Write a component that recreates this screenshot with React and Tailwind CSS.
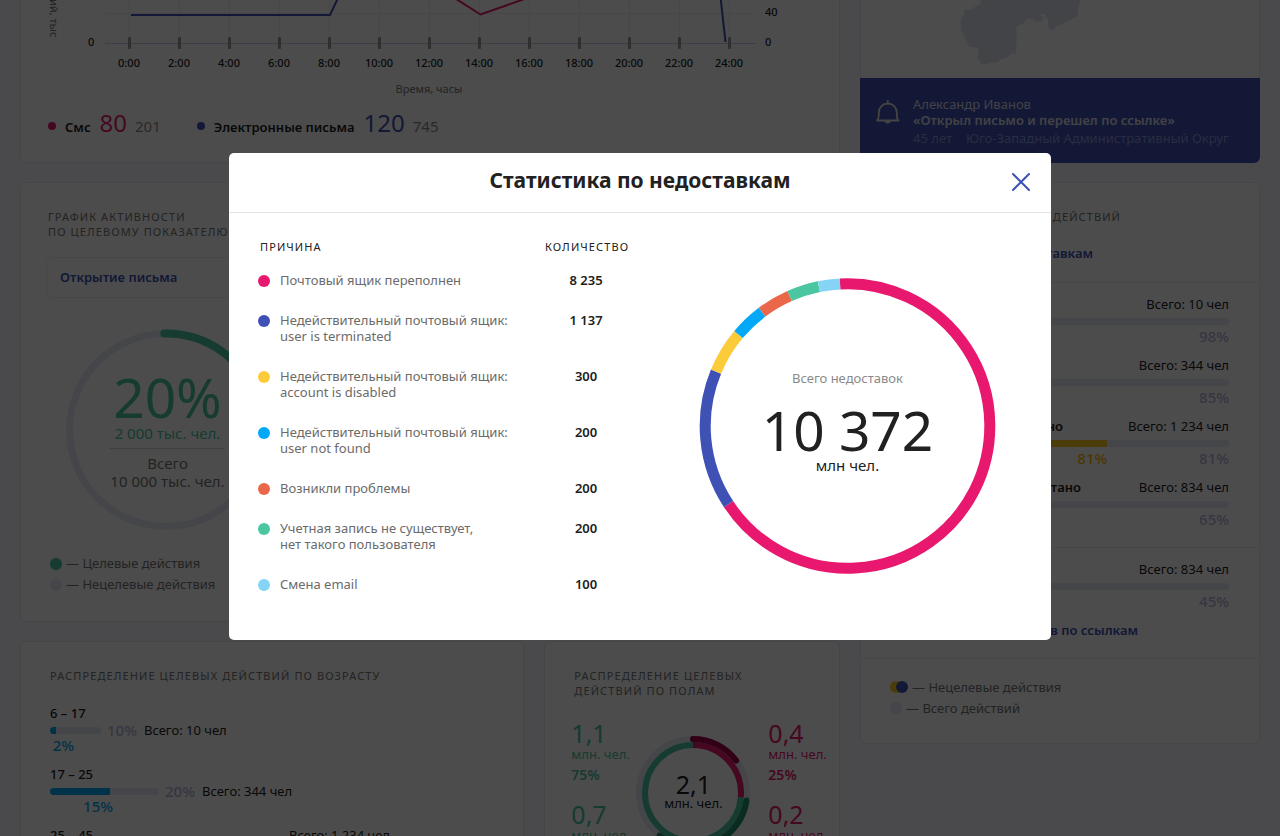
import React from "react";

const ticks = ["0:00", "2:00", "4:00", "6:00", "8:00", "10:00", "12:00", "14:00", "16:00", "18:00", "20:00", "22:00", "24:00"];

const reasons = [
  { lines: ["Почтовый ящик переполнен"], count: "8 235", color: "#e9186f", from: -3, to: 236.7 },
  { lines: ["Недействительный почтовый ящик:", "user is terminated"], count: "1 137", color: "#3f51b5", from: 236.7, to: 292.5 },
  { lines: ["Недействительный почтовый ящик:", "account is disabled"], count: "300", color: "#fccb39", from: 292.5, to: 310 },
  { lines: ["Недействительный почтовый ящик:", "user not found"], count: "200", color: "#03a9f9", from: 310, to: 323.1 },
  { lines: ["Возникли проблемы"], count: "200", color: "#eb6749", from: 323.1, to: 336 },
  { lines: ["Учетная запись не существует,", "нет такого пользователя"], count: "200", color: "#4ac6a1", from: 336, to: 348.4 },
  { lines: ["Смена email"], count: "100", color: "#86d4f5", from: 348.4, to: 357 },
];

function arcPath(cx, cy, r, from, to) {
  const point = (deg) => {
    const a = (deg * Math.PI) / 180;
    return `${cx + r * Math.sin(a)} ${cy - r * Math.cos(a)}`;
  };
  return `M ${point(from)} A ${r} ${r} 0 ${to - from > 180 ? 1 : 0} 1 ${point(to)}`;
}

function Arc({ cx, cy, r, from, to, ...rest }) {
  return <path d={arcPath(cx, cy, r, from, to)} fill="none" {...rest} />;
}

function Card({ className = "", children }) {
  return <section className={`border border-[#e9eaf4] bg-white ${className}`}>{children}</section>;
}

function CardTitle({ children }) {
  return <h2 className="text-[11px] leading-[15px] font-normal tracking-widest text-[#757575] uppercase">{children}</h2>;
}

function ActivityChart() {
  return (
    <svg viewBox="21 0 818 100" className="block w-full" fontSize="11" fill="#212121">
      <g stroke="#eeeff7">
        <path d="M105 13.5H755" />
        {ticks.map((t, i) => (
          <path key={t} d={`M${129.5 + i * 50} 0V43`} />
        ))}
      </g>
      <path d="M105 43.5H755" stroke="#c5cae9" />
      {ticks.map((t, i) => (
        <rect key={t} x={128 + i * 50} y="37" width="3" height="12" rx="1" fill="#9e9e9e" />
      ))}
      <path d="M131 15H330L338.500 -3" fill="none" stroke="#3f51b5" strokeWidth="2" />
      <path d="M453 -3L480.500 14.500L530 -3" fill="none" stroke="#e9186f" strokeWidth="2" />
      <path d="M720.500 -3L725.500 42" fill="none" stroke="#3f51b5" strokeWidth="2" />
      <text x="50" y="-1" fill="#757575" transform="rotate(90 50 -1)">ий, тыс</text>
      <text x="88" y="46" fontWeight="500">0</text>
      <text x="765" y="16" fontWeight="500">40</text>
      <text x="765" y="46" fontWeight="500">0</text>
      {ticks.map((t, i) => (
        <text key={t} x={129 + i * 50} y="67" textAnchor="middle" fontWeight="500">{t}</text>
      ))}
      <text x="429" y="93" textAnchor="middle" fill="#757575">Время, часы</text>
    </svg>
  );
}

function ChannelLegend({ name, value, total, dotClass, valueClass }) {
  return (
    <p className="flex items-baseline text-[13px] leading-4 text-[#212121]">
      <span className="font-semibold">
        <span className={`mr-[9px] mb-0.5 inline-block size-2 rounded-full ${dotClass}`} />
        {name}
      </span>
      <span className={`ml-[9px] text-[24px] leading-8 ${valueClass}`}>{value}</span>
      <span className="ml-2 text-[15px] text-[#8a8a8a]">{total}</span>
    </p>
  );
}

function LegendLine({ color, children }) {
  return (
    <li className="flex items-center gap-1">
      <span className="size-3 rounded-full" style={{ backgroundColor: color }} />
      <span>{children}</span>
    </li>
  );
}

function ActivityCard() {
  return (
    <Card className="rounded-md px-[25px] pt-[26px] pb-[26px]">
      <div className="pl-0.5">
        <CardTitle>График активности<br />по целевому показателю</CardTitle>
      </div>
      <select aria-label="Целевой показатель" className="mt-[18px] block h-[41px] w-full max-w-[400px] appearance-none rounded-md border border-[#eeeff7] bg-white px-[13px] text-[13px] font-semibold text-[#3f51b5]">
        <option>Открытие письма</option>
      </select>
      <div className="mt-[31px] ml-[19px] grid w-[202px] place-items-center">
        <svg viewBox="0 0 202 202" className="col-start-1 row-start-1 w-full">
          <circle cx="101" cy="101" r="96.500" fill="none" stroke="#e8eaf6" strokeWidth="7" />
          <Arc cx={101} cy={101} r={96.5} from={-1} to={72} stroke="#4ac6a1" strokeWidth="8" strokeLinecap="round" />
        </svg>
        <div className="col-start-1 row-start-1 pl-[3px] text-center text-[15px] leading-[18px] whitespace-nowrap text-[#757575]">
          <p className="text-[55px] leading-[54px] text-[#4ac6a1]">20%</p>
          <p className="text-[#4ac6a1]">2 000 тыс. чел.</p>
          <p className="mt-1.5 border-t border-[#d5d5d5] pt-[5px]">Всего</p>
          <p>10 000 тыс. чел.</p>
        </div>
      </div>
      <ul className="mt-[22px] ml-1 text-[13px] leading-[21px] text-[#757575]">
        <LegendLine color="#4ac6a1">— Целевые действия</LegendLine>
        <LegendLine color="#e8eaf6">— Нецелевые действия</LegendLine>
      </ul>
    </Card>
  );
}

const ages = [
  { range: "6 – 17", track: 51, fill: 6, total: "10%", part: "2%", partWidth: 24, people: "Всего: 10 чел" },
  { range: "17 – 25", track: 109, fill: 60, total: "20%", part: "15%", partWidth: 63, people: "Всего: 344 чел" },
  { range: "25 – 45", track: 340, fill: 220, people: "Всего: 1 234 чел", peopleAbove: true },
];

function AgeCard() {
  return (
    <Card className="rounded-md px-[29px] pt-[26px]">
      <CardTitle>Распределение целевых действий по возрасту</CardTitle>
      <ul className="mt-5 text-[13px] text-[#212121]">
        {ages.map((a) => (
          <li key={a.range} className="h-[61px]">
            <p className="flex items-center justify-between leading-5" style={{ width: a.track }}>
              <span className="font-medium whitespace-nowrap">{a.range}</span>
              {a.peopleAbove && <span>{a.people}</span>}
            </p>
            <div className="flex items-center leading-[14px]">
              <div className="h-[7px] overflow-hidden rounded-full bg-[#e8eaf6]" style={{ width: a.track }}>
                <div className="h-full bg-[#03a9f4]" style={{ width: a.fill }} />
              </div>
              {!a.peopleAbove && (
                <>
                  <span className="ml-1.5 text-[15px] font-medium text-[#b3b5dc]">{a.total}</span>
                  <span className="ml-[7px]">{a.people}</span>
                </>
              )}
            </div>
            {a.part && (
              <p className="text-right text-[15px] leading-4 font-medium text-[#03a9f4]" style={{ width: a.partWidth }}>{a.part}</p>
            )}
          </li>
        ))}
      </ul>
    </Card>
  );
}

function GenderStat({ value, percent }) {
  return (
    <div className="h-[81px] whitespace-nowrap">
      <p className="text-[25px] leading-7">{value}</p>
      <p className="text-[13px] leading-[14px]">млн. чел.</p>
      {percent && <p className="mt-[5px] text-[14px] leading-[18px] font-semibold">{percent}</p>}
    </div>
  );
}

function GenderCard() {
  return (
    <Card className="rounded-md pt-[26px] pl-[26px]">
      <div className="pl-[3px]">
        <CardTitle>Распределение целевых<br />действий по полам</CardTitle>
      </div>
      <div className="mt-[21px] flex">
        <div className="w-16 shrink-0 text-[#4ac6a1]">
          <GenderStat value="1,1" percent="75%" />
          <GenderStat value="0,7" />
        </div>
        <div className="mt-4 grid size-[116px] shrink-0 place-items-center">
          <svg viewBox="0 0 116 116" className="col-start-1 row-start-1 w-full">
            <circle cx="58" cy="58" r="54" fill="none" stroke="#e8eaf6" strokeWidth="6" />
            <Arc cx={58} cy={58} r={48} from={95} to={360} stroke="#4ac6a1" strokeWidth="6" />
            <Arc cx={58} cy={58} r={48} from={0} to={95} stroke="#e9186f" strokeWidth="6" />
            <Arc cx={58} cy={58} r={54} from={0} to={53} stroke="#a3004b" strokeWidth="6" strokeLinecap="round" />
            <Arc cx={58} cy={58} r={54} from={98} to={218} stroke="#1f8f6b" strokeWidth="6" strokeLinecap="round" />
          </svg>
          <div className="col-start-1 row-start-1 pb-1 text-center whitespace-nowrap text-[#212121]">
            <p className="text-[25px] leading-6">2,1</p>
            <p className="text-[13px] leading-[14px]">млн. чел.</p>
          </div>
        </div>
        <div className="ml-[17px] text-[#e9186f]">
          <GenderStat value="0,4" percent="25%" />
          <GenderStat value="0,2" />
        </div>
      </div>
    </Card>
  );
}

function MapCard() {
  return (
    <section className="overflow-hidden rounded-b-md bg-white">
      <svg viewBox="860 0 400 78" className="block w-full border-x border-[#e9eaf4]">
        <path
          fill="#e2e5f0"
          d="M980 0L980.500 4L974 7L973 9L964 10L963 15L960 20L961 31L965 40L969 47L977 48L978.500 54L976 59L979 60L980 64L984 65L991 63L998 62L999 60L1009 57L1010 54L1015.500 54L1016.500 40L1016 27L1024 23L1027 18.500L1033 20L1035 22L1041 21.500L1044 18L1040 15L1044 14L1048 20L1048 27L1052 31L1056 27L1078 16.500L1078 9L1080.500 0Z"
        />
      </svg>
      <div className="flex bg-[#3f51b5] px-4 pt-[18px] pb-4">
        <svg viewBox="0 0 24 24" className="mt-1 size-6 shrink-0" fill="none" stroke="#e3e3e8" strokeWidth="1.800" strokeLinejoin="round" strokeLinecap="round">
          <path d="M1 20.500H22.500C20.500 19 20.800 16.500 20.800 12.500A9 9 0 0 0 2.800 12.500C2.800 16.500 3 19 1 20.500Z" />
          <path d="M11.800 1V3.200M9.500 21C10 23 13.500 23 14 21" />
        </svg>
        <div className="ml-[13px] text-[13px] leading-4 text-[#dcdde6]">
          <p>Александр Иванов</p>
          <p className="font-semibold">«Открыл письмо и перешел по ссылке»</p>
          <p className="mt-0.5 flex gap-3.5 pb-px whitespace-nowrap text-[#8c96d0]">
            <span>45 лет</span>
            <span>Юго-Западный Административный Округ</span>
          </p>
        </div>
      </div>
    </section>
  );
}

function ActionRow({ label, labelWidth = 172, total, percent, part }) {
  return (
    <div className="h-[61px]">
      <div className="flex items-center justify-between text-[13px] leading-4 text-[#212121]">
        <span className="text-right font-semibold" style={{ width: labelWidth }}>{label}</span>
        <span>Всего: {total} чел</span>
      </div>
      <div className="mt-1.5 h-[7px] overflow-hidden rounded-full bg-[#e8eaf6]">
        {part && <div className="h-full w-[64%] bg-[#fcca1e]" />}
      </div>
      <div className="mt-0.5 flex text-[15px] leading-[18px] font-medium text-[#b3b5dc]">
        {part && <span className="w-[64%] text-right text-[#fcb900]">{part}</span>}
        <span className="ml-auto">{percent}</span>
      </div>
    </div>
  );
}

function ActionsCard() {
  return (
    <Card className="rounded-md">
      <div className="border-b border-[#e9eaf4] pt-[26px] pb-[19px]">
        <div className="flex w-[260px] justify-end"><CardTitle>действий</CardTitle></div>
        <p className="mt-[19px] w-[232px] text-right text-[13px] leading-5 font-semibold text-[#3f51b5]">
          <a href="#bounces">недоставкам</a>
        </p>
      </div>
      <div className="border-b border-[#e9eaf4] px-[30px] pt-[13px] pb-[7px]">
        <ActionRow total="10" percent="98%" />
        <ActionRow total="344" percent="85%" />
        <ActionRow label="Доставлено" total="1 234" percent="81%" part="81%" />
        <ActionRow label="Прочитано" labelWidth={190} total="834" percent="65%" />
      </div>
      <div className="border-b border-[#e9eaf4] px-[30px] pt-[13px] pb-5">
        <ActionRow total="834" percent="45%" />
        <p className="w-[247px] text-right text-[13px] leading-4 font-semibold text-[#3f51b5]">
          <a href="#links">Переходов по ссылкам</a>
        </p>
      </div>
      <ul className="px-[29px] pt-[18px] pb-[24px] text-[13px] leading-[21px] text-[#757575]">
        <li className="flex items-center gap-1">
          <span className="flex -space-x-1.5">
            <span className="size-3 rounded-full bg-[#fcca1e]" />
            <span className="size-3 rounded-full bg-[#3f51b5]" />
          </span>
          <span>— Нецелевые действия</span>
        </li>
        <LegendLine color="#e8eaf6">— Всего действий</LegendLine>
      </ul>
    </Card>
  );
}

function BounceDialog() {
  return (
    <div className="fixed inset-0 flex items-start justify-center bg-black/70 pt-[153px]">
      <div role="dialog" aria-modal="true" aria-labelledby="dialog-title" className="w-full max-w-[822px] rounded-[5px] bg-white">
        <header className="grid h-[60px] grid-cols-[60px_1fr_60px] items-center border-b border-[#e5e5e5] pb-0.5">
          <h1 id="dialog-title" className="col-start-2 pb-[3px] text-center text-[21px] leading-7 font-bold text-[#212121]">Статистика по недоставкам</h1>
          <button type="button" aria-label="Закрыть" className="grid size-8 place-items-center justify-self-center text-[#3f51b5]">
            <svg viewBox="0 0 18 18" className="size-[18px]" stroke="currentColor" strokeWidth="2" strokeLinecap="round">
              <path d="M1 1L17 17M17 1L1 17" />
            </svg>
          </button>
        </header>
        <div className="flex justify-between pr-[55px] pb-6 pl-[29px]">
          <table className="mt-[26px] self-start">
            <thead>
              <tr className="text-[11px] leading-4 tracking-widest text-[#212121] uppercase">
                <th className="w-[287px] pb-[17px] pl-0.5 text-left font-normal">Причина</th>
                <th className="pb-[17px] text-center font-normal">Количество</th>
              </tr>
            </thead>
            <tbody className="align-top text-[13px] leading-4">
              {reasons.map((r, i) => (
                <tr key={i}>
                  <td className="pb-6 text-[#6b6b6b]">
                    <div className="flex gap-[10px]">
                      <span className="mt-[3px] size-3 shrink-0 rounded-full" style={{ backgroundColor: r.color }} />
                      <span>{r.lines.map((l) => <span key={l} className="block">{l}</span>)}</span>
                    </div>
                  </td>
                  <td className="pr-0.5 pb-6 text-center font-semibold text-[#212121]">{r.count}</td>
                </tr>
              ))}
            </tbody>
          </table>
          <div className="mt-[64px] grid size-[297px] place-items-center">
            <svg viewBox="0 0 297 297" className="col-start-1 row-start-1 w-full">
              {reasons.map((r, i) => (
                <Arc key={i} cx={148.5} cy={149} r={142.3} from={r.from} to={r.to} stroke={r.color} strokeWidth="11" />
              ))}
            </svg>
            <div className="col-start-1 row-start-1 pb-2.5 text-center text-[#212121]">
              <p className="text-[13px] leading-5 text-[#8a8a8a]">Всего недоставок</p>
              <p className="mt-[15px] text-[55px] leading-[54px]">10 372</p>
              <p className="text-[15px] leading-4">млн чел.</p>
            </div>
          </div>
        </div>
      </div>
    </div>
  );
}

export default function App() {
  return (
    <div className="h-screen overflow-hidden bg-[#f8f8fe] font-['Noto_Sans','Open_Sans',sans-serif]">
      <main className="flex items-start gap-5 px-5">
        <div className="flex min-w-0 flex-1 flex-col gap-[19px]">
          <Card className="rounded-b-md border-t-0 pb-[23px]">
            <ActivityChart />
            <div className="mt-[7px] flex gap-9 pl-[27px]">
              <ChannelLegend name="Смс" value="80" total="201" dotClass="bg-[#e9186f]" valueClass="text-[#e9186f]" />
              <ChannelLegend name="Электронные письма" value="120" total="745" dotClass="bg-[#3f51b5]" valueClass="text-[#3f51b5]" />
            </div>
          </Card>
          <ActivityCard />
          <div className="grid grid-cols-[505fr_296fr] gap-5">
            <AgeCard />
            <GenderCard />
          </div>
        </div>
        <div className="flex w-[400px] shrink-0 flex-col gap-[19px]">
          <MapCard />
          <ActionsCard />
        </div>
      </main>
      <BounceDialog />
    </div>
  );
}
